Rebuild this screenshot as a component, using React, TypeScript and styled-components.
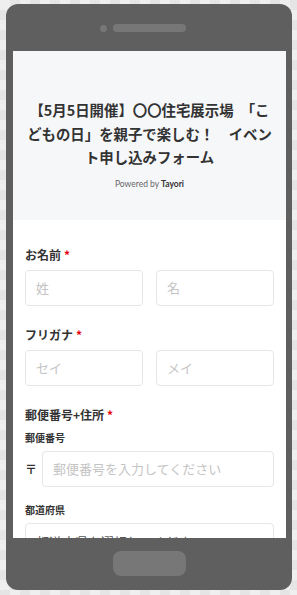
import React from "react";
import styled, { createGlobalStyle } from "styled-components";

const GlobalStyle = createGlobalStyle`
  html, body {
    margin: 0;
    padding: 0;
  }
  body {
    width: 297px;
    height: 595px;
    overflow: hidden;
    font-family: "Noto Sans CJK JP", "Noto Sans", sans-serif;
    background-color: #efefef;
    background-image:
      linear-gradient(45deg, #e5e5e5 25%, transparent 25%, transparent 75%, #e5e5e5 75%),
      linear-gradient(45deg, #e5e5e5 25%, transparent 25%, transparent 75%, #e5e5e5 75%);
    background-size: 20px 20px;
    background-position: 0 0, 10px 10px;
  }
`;

const Phone = styled.div`
  margin: 4px 5px 5px 6px;
  width: 286px;
  height: 586px;
  border-radius: 12px;
  background: #5e5f5e;
  display: flex;
  flex-direction: column;
  padding: 0 6px 0 7px;
  box-sizing: border-box;
`;

const TopBezel = styled.div`
  height: 47px;
  padding-top: 20px;
  box-sizing: border-box;
  display: flex;
  justify-content: center;
  align-items: flex-start;
  gap: 6px;
`;

const Camera = styled.div`
  width: 7px;
  height: 7px;
  margin-top: 1px;
  border-radius: 50%;
  background: #767776;
`;

const Speaker = styled.div`
  width: 73px;
  height: 8px;
  border-radius: 4px;
  background: #767776;
  margin-right: 13px;
`;

const Screen = styled.div`
  height: 487px;
  background: #fff;
  overflow: hidden;
`;

const Header = styled.header`
  background: #f6f7f9;
  padding: 47px 13px 31px;
  text-align: center;
`;

const Title = styled.h1`
  margin: 0;
  font-size: 14.4px;
  line-height: 23.5px;
  font-weight: 700;
  color: #333;
`;

const Powered = styled.p`
  margin: 10px 0 0;
  font-family: "Lato", "Noto Sans", sans-serif;
  font-size: 8.5px;
  color: #666;

  b {
    color: #333;
    font-weight: 700;
  }
`;

const Form = styled.form`
  padding: 26px 12px 0;
`;

const Field = styled.div`
  margin-bottom: 20px;
`;

const Label = styled.div`
  font-size: 12px;
  line-height: 18px;
  font-weight: 700;
  color: #333;
  margin-bottom: 6px;

  span {
    color: #e60012;
    margin-left: 3px;
  }
`;

const SubLabel = styled.div<{ $top?: number }>`
  font-size: 10px;
  line-height: 16px;
  font-weight: 700;
  color: #333;
  margin-top: ${(p) => p.$top ?? 0}px;
  margin-bottom: 5px;
`;

const Pair = styled.div`
  display: grid;
  grid-template-columns: 1fr 1fr;
  gap: 13px;
`;

const Input = styled.input`
  display: block;
  width: 100%;
  height: 36px;
  box-sizing: border-box;
  border: 1px solid #e6e6e6;
  border-radius: 4px;
  padding: 0 10px;
  font-family: "Noto Sans CJK JP", sans-serif;
  font-size: 13px;
  color: #333;
  background: #fff;
  outline: none;

  &::placeholder {
    color: #c4c4c4;
  }
`;

const ZipRow = styled.div`
  display: flex;
  align-items: center;
`;

const ZipMark = styled.span`
  width: 17px;
  flex: none;
  font-size: 12px;
  font-weight: 700;
  color: #333;
`;

const Select = styled.div`
  height: 36px;
  box-sizing: border-box;
  border: 1px solid #e6e6e6;
  border-radius: 4px;
  padding: 8px 10px;
  font-size: 13px;
  color: #555;
`;

const BottomBezel = styled.div`
  flex: 1;
  display: flex;
  justify-content: center;
  padding-top: 13px;
`;

const HomeButton = styled.div`
  width: 73px;
  height: 25px;
  border-radius: 8px;
  background: #767776;
`;

const App: React.FC = () => {
  return (
    <>
      <GlobalStyle />
      <Phone>
        <TopBezel>
          <Camera />
          <Speaker />
        </TopBezel>
        <Screen>
          <Header>
            <Title>【5月5日開催】〇〇住宅展示場　「こどもの日」を親子で楽しむ！　イベント申し込みフォーム</Title>
            <Powered>
              Powered by <b>Tayori</b>
            </Powered>
          </Header>
          <Form>
            <Field>
              <Label>
                お名前<span>*</span>
              </Label>
              <Pair>
                <Input placeholder="姓" />
                <Input placeholder="名" />
              </Pair>
            </Field>
            <Field>
              <Label>
                フリガナ<span>*</span>
              </Label>
              <Pair>
                <Input placeholder="セイ" />
                <Input placeholder="メイ" />
              </Pair>
            </Field>
            <Field>
              <Label>
                郵便番号+住所<span>*</span>
              </Label>
              <SubLabel $top={2}>郵便番号</SubLabel>
              <ZipRow>
                <ZipMark>〒</ZipMark>
                <Input placeholder="郵便番号を入力してください" />
              </ZipRow>
              <SubLabel $top={15}>都道府県</SubLabel>
              <Select>都道府県を選択してください</Select>
            </Field>
          </Form>
        </Screen>
        <BottomBezel>
          <HomeButton />
        </BottomBezel>
      </Phone>
    </>
  );
};

export default App;
